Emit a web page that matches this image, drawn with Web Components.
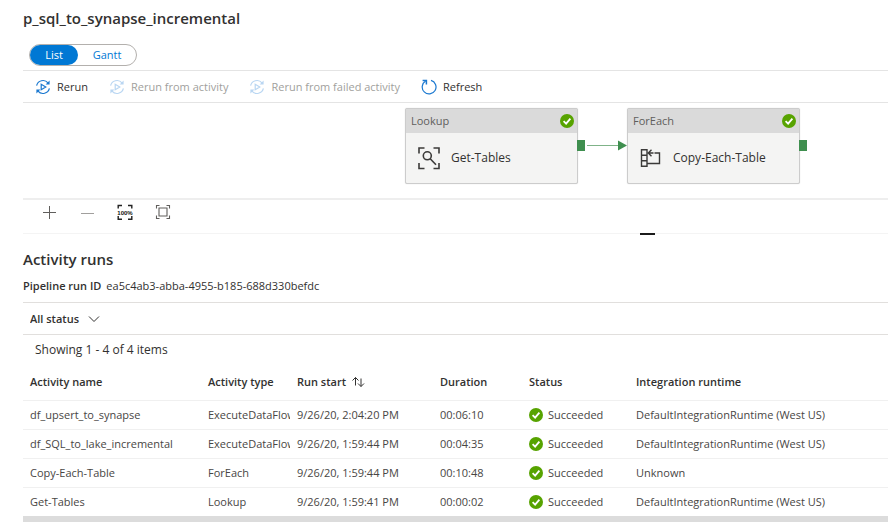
<!DOCTYPE html>
<html lang="en">
<head>
<meta charset="utf-8">
<title>p_sql_to_synapse_incremental</title>
<style>
  body {
    margin: 0;
    background: #fff;
    color: #323130;
    font: 11px/16px "Open Sans", "Noto Sans", sans-serif;
  }
</style>
</head>
<body>
<run-page></run-page>

<script>
// shared helper: attach an open shadow root and fill it
function render(el, html) {
  const template = document.createElement('template');
  template.innerHTML = html;
  el.attachShadow({ mode: 'open' }).append(template.content.cloneNode(true));
}

const ICONS = {
  rerun: `<svg viewBox="0 0 16 16" width="16" height="16" fill="none" stroke="currentColor" stroke-width="1.2">
      <path d="M1.6 6.6A6.6 6.6 0 0 1 13 3.8M14.4 9.4A6.6 6.6 0 0 1 3 12.2"/>
      <path d="M14.6 1.4V5.4H10.6ZM1.4 14.6V10.6H5.4Z" fill="currentColor" stroke="none"/>
      <path d="M6.2 5.2V10.8L10.8 8Z"/></svg>`,
  refresh: `<svg viewBox="0 0 16 16" width="16" height="16" fill="none" stroke="currentColor" stroke-width="1.2">
      <path d="M10 1.4A6.9 6.9 0 1 1 4.6 2.1"/><path d="M1.6 1.6H5.4V5.4" stroke-width="1.5"/></svg>`,
  plus: `<svg viewBox="0 0 16 16" width="16" height="16" stroke="#605e5c" fill="none"><path d="M2 8.5H15M8.5 2V15"/></svg>`,
  minus: `<svg viewBox="0 0 16 16" width="16" height="16" stroke="#a19f9d" fill="none"><path d="M2 9.5H15"/></svg>`,
  full: `<svg viewBox="0 0 16 16" width="16" height="16" stroke="#222" fill="none" stroke-width="1.4">
      <path d="M1.2 4.5V1.5H5M11 1.5H14.8V4.5M14.8 12V15.2H11M5 15.2H1.2V12"/>
      <text x="8" y="10.5" text-anchor="middle" fill="#111" stroke="none" font-size="6" font-weight="800">100%</text></svg>`,
  fit: `<svg viewBox="0 0 16 16" width="16" height="16" stroke="#605e5c" fill="none" stroke-width="1.1">
      <path d="M1.5 4.5V1.5H4.5M11.5 1.5H14.5V4.5M14.5 11.5V14.5H11.5M4.5 14.5H1.5V11.5M4 4H12V12H4Z"/></svg>`,
  lookup: `<svg viewBox="0 0 24 24" width="24" height="24" stroke="#3b3a39" fill="none" stroke-width="1.6">
      <path d="M2 7.5V2H7.5M16.5 2H22V7.5M22 17V22.5H16.5M7.5 22.5H2V17"/>
      <circle cx="10.3" cy="9.8" r="4"/><path d="M13.2 12.8L19 18.8"/></svg>`,
  foreach: `<svg viewBox="0 0 24 24" width="24" height="24" stroke="#3b3a39" fill="none" stroke-width="1.4">
      <path d="M2.5 3.7H8V20.3H2.5ZM2.5 9.2H8M2.5 14.8H8M15.5 7H20.5V17.5H8M9 7H14.5M12.5 3.8L9.3 7L12.5 10.2"/></svg>`,
  sort: `<svg viewBox="0 0 14 12" width="14" height="12" stroke="currentColor" fill="none">
      <path d="M4.5 9.5V1.5M1.5 4.5L4.5 1.5L7.5 4.5M10 2.5V10.5M7 7.5L10 10.5L13 7.5"/></svg>`,
  chevron: `<svg viewBox="0 0 12 8" width="12" height="8" stroke="currentColor" fill="none"><path d="M1 1.5L6 6.5L11 1.5"/></svg>`,
  ok: `<svg viewBox="0 0 14 14" width="14" height="14"><circle cx="7" cy="7" r="7" fill="#57a300"/>
      <path d="M3.6 7.2L6.1 9.6L10.4 4.6" stroke="#fff" stroke-width="1.8" fill="none"/></svg>`
};

class SvgIcon extends HTMLElement {
  constructor() {
    super();
    render(this, `<style>:host { display: inline-flex; flex: none; } svg { display: block; }</style>`
      + ICONS[this.getAttribute('name')]);
  }
}

class ViewSwitch extends HTMLElement {
  constructor() {
    super();
    render(this, `
      <style>
        :host { display: inline-flex; box-sizing: border-box; height: 22px; border: 1px solid #b3b0ad; border-radius: 11px; }
        button {
          border: 0; background: none; color: #0078d4; border-radius: 10px;
          font: inherit; line-height: 20px; padding: 0; width: 58px;
        }
        button[aria-pressed=true] { background: #0078d4; color: #fff; width: 48px; }
      </style>
      <button aria-pressed="true">List</button><button aria-pressed="false">Gantt</button>
    `);
    this.shadowRoot.addEventListener('click', e => {
      if (e.target.tagName !== 'BUTTON') return;
      this.shadowRoot.querySelectorAll('button').forEach(b => b.setAttribute('aria-pressed', b === e.target));
    });
  }
}

class ToolButton extends HTMLElement {
  constructor() {
    super();
    const disabled = this.hasAttribute('disabled') ? 'disabled' : '';
    render(this, `
      <style>
        :host { display: inline-flex; }
        button { display: flex; align-items: center; gap: 6px; border: 0; padding: 0; background: none; font: inherit; color: #323130; }
        svg-icon { color: #1a78d0; }
        button:disabled { color: #a19f9d; }
        button:disabled svg-icon { color: #b9d6f2; }
      </style>
      <button ${disabled}><svg-icon name="${this.getAttribute('icon')}"></svg-icon><slot></slot></button>
    `);
  }
}

class ActivityNode extends HTMLElement {
  constructor() {
    super();
    render(this, `
      <style>
        :host { display: block; box-sizing: border-box; width: 173px; border: 1px solid #ccc; border-radius: 2px; background: #f4f4f3; box-shadow: 0 0 1px #ccc; }
        header { display: flex; align-items: center; justify-content: space-between; height: 24px; padding: 0 3px 0 5px; background: #dadada; color: #605e5c; }
        .body { display: flex; align-items: center; gap: 10px; height: 50px; padding-left: 11px; font-size: 12px; }
        .port { position: absolute; left: 100%; top: 31px; width: 8px; height: 11px; background: #3f8f4f; }
      </style>
      <header>${this.getAttribute('kind')}<svg-icon name="ok"></svg-icon></header>
      <div class="body"><svg-icon name="${this.getAttribute('icon')}"></svg-icon><slot></slot></div>
      <div class="port"></div>
    `);
  }
}

class PipelineCanvas extends HTMLElement {
  constructor() {
    super();
    render(this, `
      <style>
        :host { display: block; position: relative; height: 95px; overflow: hidden; border-bottom: 2px solid #eee; }
        activity-node { position: absolute; top: 5px; }
        .lookup { left: 382px; }
        .foreach { left: 604px; }
        .link { position: absolute; left: 564px; top: 36px; }
      </style>
      <activity-node class="lookup" kind="Lookup" icon="lookup">Get-Tables</activity-node>
      <svg class="link" width="40" height="12" viewBox="0 0 40 12">
        <path d="M0 6.5H32" stroke="#7fb388"/><path d="M31 1.5L40 6.5L31 11.5Z" fill="#3f8f4f"/>
      </svg>
      <activity-node class="foreach" kind="ForEach" icon="foreach">Copy-Each-Table</activity-node>
    `);
  }
}

class CanvasZoom extends HTMLElement {
  constructor() {
    super();
    render(this, `
      <style>
        :host { display: flex; gap: 22px; align-items: flex-start; height: 34px; padding: 4px 0 0 18px; box-sizing: border-box; position: relative; border-bottom: 1px solid #f4f4f4; }
        button { border: 0; padding: 0; background: none; }
        .grip { position: absolute; left: calc((100% + 382px) / 2 - 7px); bottom: -2px; width: 15px; height: 2px; background: #1b1b1b; }
      </style>
      <button aria-label="Zoom in"><svg-icon name="plus"></svg-icon></button>
      <button aria-label="Zoom out"><svg-icon name="minus"></svg-icon></button>
      <button aria-label="Actual size"><svg-icon name="full"></svg-icon></button>
      <button aria-label="Zoom to fit"><svg-icon name="fit"></svg-icon></button>
      <div class="grip"></div>
    `);
  }
}

class StatusFilter extends HTMLElement {
  constructor() {
    super();
    render(this, `
      <style>
        :host { display: flex; align-items: center; height: 31px; padding-left: 7px; border: solid #e1dfdd; border-width: 1px 0; }
        label { display: grid; align-items: center; }
        select { grid-area: 1 / 1; appearance: none; border: 0; margin: 0; padding: 0 20px 0 0; background: none; font: inherit; font-weight: 600; color: inherit; }
        svg-icon { grid-area: 1 / 1; justify-self: end; pointer-events: none; }
      </style>
      <label>
        <select aria-label="Status filter"><option>All status</option></select>
        <svg-icon name="chevron"></svg-icon>
      </label>
    `);
  }
}

const RUNS = [
  ['df_upsert_to_synapse', 'ExecuteDataFlow', '9/26/20, 2:04:20 PM', '00:06:10', 'Succeeded', 'DefaultIntegrationRuntime (West US)'],
  ['df_SQL_to_lake_incremental', 'ExecuteDataFlow', '9/26/20, 1:59:44 PM', '00:04:35', 'Succeeded', 'DefaultIntegrationRuntime (West US)'],
  ['Copy-Each-Table', 'ForEach', '9/26/20, 1:59:44 PM', '00:10:48', 'Succeeded', 'Unknown'],
  ['Get-Tables', 'Lookup', '9/26/20, 1:59:41 PM', '00:00:02', 'Succeeded', 'DefaultIntegrationRuntime (West US)']
];

class ActivityTable extends HTMLElement {
  constructor() {
    super();
    const rows = RUNS.map(run => `<tr>${run.map((value, i) =>
      `<td>${i === 4 ? `<span class="status"><svg-icon name="ok"></svg-icon>${value}</span>` : value}</td>`).join('')}</tr>`).join('');
    render(this, `
      <style>
        :host { display: block; }
        table { width: 100%; table-layout: fixed; border-collapse: collapse; }
        th, td { padding: 0 0 0 7px; text-align: left; white-space: nowrap; overflow: hidden; border-bottom: 1px solid #f0f0f0; }
        th { height: 36px; font-weight: 600; }
        td { height: 28px; color: #484644; }
        tr:last-child td { border-bottom: 0; }
        button { display: flex; align-items: center; gap: 5px; border: 0; padding: 0; background: none; font: inherit; color: inherit; }
        .status { display: flex; align-items: center; gap: 5px; }
        .scroll { height: 6px; background: #dcdcdc; }
      </style>
      <table>
        <colgroup>
          <col style="width:178px"><col style="width:89px"><col style="width:143px">
          <col style="width:89px"><col style="width:107px"><col>
        </colgroup>
        <thead><tr>
          <th>Activity name</th><th>Activity type</th>
          <th><button>Run start<svg-icon name="sort"></svg-icon></button></th>
          <th>Duration</th><th>Status</th><th>Integration runtime</th>
        </tr></thead>
        <tbody>${rows}</tbody>
      </table>
      <div class="scroll"></div>
    `);
  }
}

class RunPage extends HTMLElement {
  constructor() {
    super();
    render(this, `
      <style>
        :host { display: block; padding: 8px 0 0 23px; }
        h1, h2, p { margin: 0; }
        h1, h2 { font-size: 15px; line-height: 20px; font-weight: 600; }
        h2 { margin-top: 15px; }
        view-switch { display: flex; width: fit-content; margin: 16px 0 4px 6px; }
        .tools { display: flex; align-items: center; gap: 21px; height: 31px; padding-left: 12px; border: solid #e4e4e4; border-width: 1px 0; }
        .run-id { display: flex; gap: 5px; margin: 9px 0 8px; }
        .run-id b { font-weight: 600; }
        .count { padding: 7px 12px 6px; font-size: 12px; }
      </style>
      <h1>p_sql_to_synapse_incremental</h1>
      <view-switch></view-switch>
      <div class="tools">
        <tool-button icon="rerun">Rerun</tool-button>
        <tool-button icon="rerun" disabled>Rerun from activity</tool-button>
        <tool-button icon="rerun" disabled>Rerun from failed activity</tool-button>
        <tool-button icon="refresh">Refresh</tool-button>
      </div>
      <pipeline-canvas></pipeline-canvas>
      <canvas-zoom></canvas-zoom>
      <h2>Activity runs</h2>
      <p class="run-id"><b>Pipeline run ID</b><span>ea5c4ab3-abba-4955-b185-688d330befdc</span></p>
      <status-filter></status-filter>
      <p class="count">Showing 1 - 4 of 4 items</p>
      <activity-table></activity-table>
    `);
  }
}

customElements.define('svg-icon', SvgIcon);
customElements.define('view-switch', ViewSwitch);
customElements.define('tool-button', ToolButton);
customElements.define('activity-node', ActivityNode);
customElements.define('pipeline-canvas', PipelineCanvas);
customElements.define('canvas-zoom', CanvasZoom);
customElements.define('status-filter', StatusFilter);
customElements.define('activity-table', ActivityTable);
customElements.define('run-page', RunPage);
</script>
</body>
</html>
